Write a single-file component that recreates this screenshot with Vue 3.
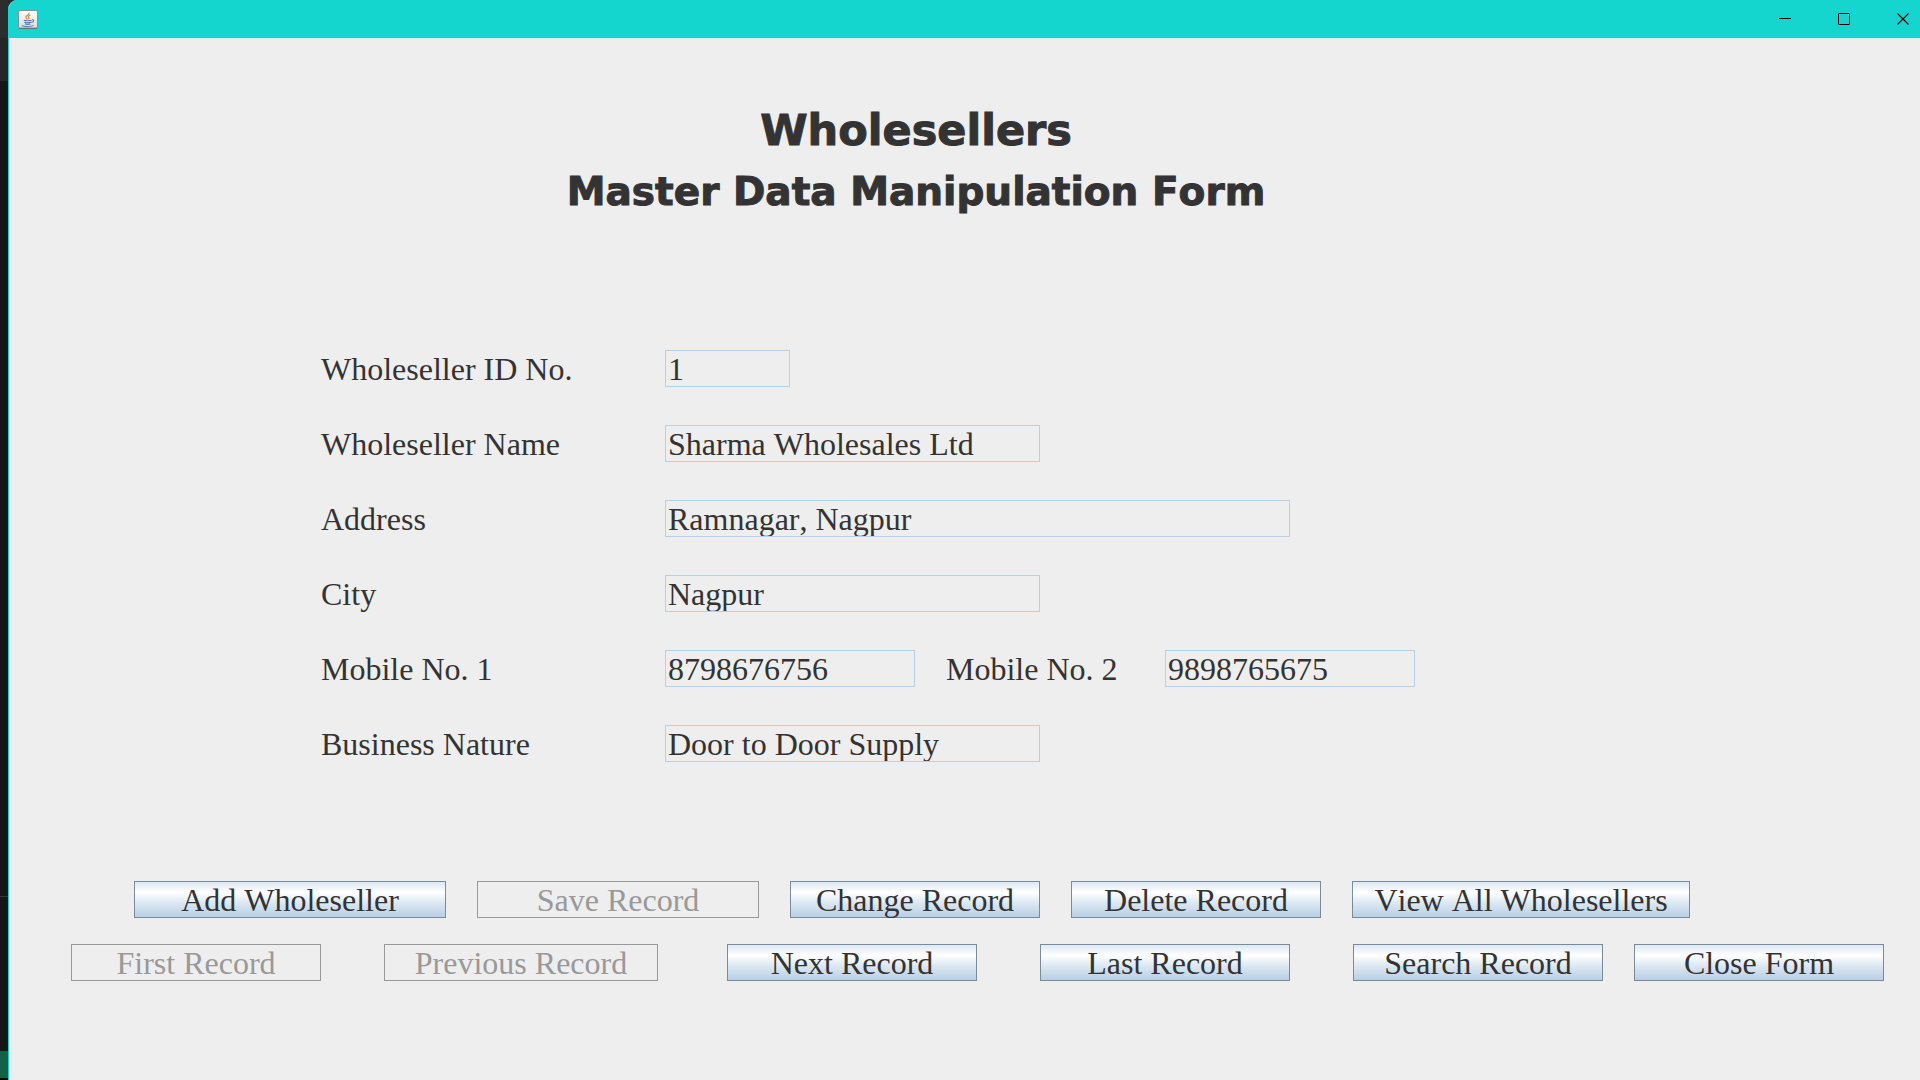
<script setup>
import { ref } from 'vue'

const record = ref({
  id: '1',
  name: 'Sharma Wholesales Ltd',
  address: 'Ramnagar, Nagpur',
  city: 'Nagpur',
  mobile1: '8798676756',
  mobile2: '9898765675',
  business: 'Door to Door Supply',
})

const rows = [
  [{ key: 'id', label: 'Wholeseller ID No.', size: 'short' }],
  [{ key: 'name', label: 'Wholeseller Name', size: 'long' }],
  [{ key: 'address', label: 'Address', size: 'full' }],
  [{ key: 'city', label: 'City', size: 'long' }],
  [
    { key: 'mobile1', label: 'Mobile No. 1', size: 'medium' },
    { key: 'mobile2', label: 'Mobile No. 2', size: 'medium' },
  ],
  [{ key: 'business', label: 'Business Nature', size: 'long' }],
]
</script>

<template>
  <div class="desktop">
    <div class="backdrop" aria-hidden="true">
      <span class="backdrop-top"></span>
      <span class="backdrop-upper"></span>
      <span class="backdrop-main"></span>
      <span class="backdrop-lower"></span>
      <span class="backdrop-status"></span>
    </div>

    <div class="window">
      <header class="titlebar">
        <svg class="app-icon" width="20" height="19" viewBox="0 0 20 19" aria-hidden="true">
          <defs>
            <linearGradient id="tile" x1="0" y1="0" x2="0" y2="1">
              <stop offset="0" stop-color="#ffffff" />
              <stop offset="1" stop-color="#d9dcdc" />
            </linearGradient>
          </defs>
          <rect x="0.5" y="0.5" width="19" height="18" rx="1.5" fill="url(#tile)" stroke="#7d9796" />
          <path d="M1 18.2H19" stroke="#4d6b6b" stroke-width="1" />
          <path d="M10.8 2.8c1.2 1.8-2.9 2.6-2.9 4.3 0 1 .9 1.5 1.5 2.4M12.3 5.2c-1.7.5-2.3 1.3-1.5 2.3.5.7.2 1.3-.5 1.8" fill="none" stroke="#e38b42" stroke-width="1.3" />
          <path d="M5.8 10.2c1.5.7 6.2.7 7.8 0M6.3 12.3c1.5.7 5.5.7 7 0M7 14c1.5.5 4 .5 5.5 0M14 9.8c2.200-.5 2.200 2-.4 2.600M4.500 15.300c-2 1.200 8.500 1.800 11 .1" fill="none" stroke="#5a7fa3" stroke-width="1.1" />
        </svg>
        <div class="window-controls">
          <button type="button" aria-label="Minimize">
            <svg width="12" height="12" viewBox="0 0 12 12"><path d="M0 5.5H12" stroke="#000" /></svg>
          </button>
          <button type="button" aria-label="Maximize">
            <svg width="12" height="12" viewBox="0 0 12 12"><rect x="0.5" y="0.5" width="11" height="11" rx="0.5" fill="none" stroke="#000" /></svg>
          </button>
          <button type="button" aria-label="Close">
            <svg width="12" height="12" viewBox="0 0 12 12"><path d="M0.5 0.5L11.5 11.5M11.5 0.5L0.5 11.5" stroke="#000" stroke-width="1.1" /></svg>
          </button>
        </div>
      </header>

      <main class="content">
        <div class="headings">
          <h1>Wholesellers</h1>
          <h2>Master Data Manipulation Form</h2>
        </div>

        <form class="form" @submit.prevent>
          <div v-for="(row, i) in rows" :key="i" class="row">
            <template v-for="field in row" :key="field.key">
              <label :for="field.key">{{ field.label }}</label>
              <input :id="field.key" v-model="record[field.key]" :class="field.size" type="text" readonly />
            </template>
          </div>
        </form>

        <div class="actions actions-edit">
          <button type="button" class="w-add">Add Wholeseller</button>
          <button type="button" class="w-save" disabled>Save Record</button>
          <button type="button">Change Record</button>
          <button type="button">Delete Record</button>
          <button type="button" class="w-view">View All Wholesellers</button>
        </div>
        <div class="actions actions-browse">
          <button type="button" disabled>First Record</button>
          <button type="button" class="w-previous" disabled>Previous Record</button>
          <button type="button">Next Record</button>
          <button type="button">Last Record</button>
          <div class="pair">
            <button type="button">Search Record</button>
            <button type="button">Close Form</button>
          </div>
        </div>
      </main>
    </div>
  </div>
</template>

<style>
body {
  margin: 0;
  background: #181818;
}
</style>

<style scoped>
.desktop {
  display: flex;
  min-height: 100vh;
  background: #2a2a2a;
  color: #333333;
  font-family: "Liberation Serif", "Times New Roman", serif;
  font-size: 32px;
  font-kerning: none;
}

.backdrop {
  display: flex;
  flex-direction: column;
  flex: none;
  width: 8px;
  background: #000000;
}

.backdrop-top {
  height: 38px;
  background: #2d2d2d;
}

.backdrop-upper {
  height: 43px;
  background: #262626;
}

.backdrop-main {
  flex: 1;
  background: #161616;
  border-bottom: 1px solid #363636;
}

.backdrop-lower {
  height: 154px;
  background: #161616;
}

.backdrop-status {
  height: 27px;
  margin-bottom: 2px;
  background: #126247;
}

.window {
  display: flex;
  flex-direction: column;
  flex: 1;
  min-width: 0;
  border-left: 1px solid #14d6cf;
  border-top-left-radius: 9px;
  background: #eeeeee;
  overflow: hidden;
}

.titlebar {
  display: flex;
  align-items: center;
  justify-content: space-between;
  height: 38px;
  padding-left: 9px;
  background: #14d6cf;
}

.window-controls {
  display: flex;
  gap: 25px;
}

.window-controls button {
  display: flex;
  align-items: center;
  justify-content: center;
  width: 34px;
  height: 38px;
  padding: 0;
  border: 0;
  background: none;
}

.headings {
  margin: 64px 97px 0 0;
  font-family: "Arial Black", "DejaVu Sans", sans-serif;
  text-align: center;
  -webkit-text-stroke: 1px #333333;
}

h1,
h2 {
  margin: 0;
  font-weight: 900;
}

h1 {
  font-size: 43px;
  line-height: 56px;
}

h2 {
  font-size: 39px;
  line-height: 68px;
}

.form {
  display: flex;
  flex-direction: column;
  gap: 38px;
  margin: 124px 0 0 312px;
}

.row {
  display: flex;
  align-items: center;
}

label {
  box-sizing: border-box;
  width: 344px;
  height: 37px;
  padding-top: 2px;
  line-height: 35px;
}

input + label {
  width: 219px;
  margin-left: 31px;
}

input {
  box-sizing: border-box;
  height: 37px;
  padding: 2px 2px 0;
  border: 1px solid #b8cfe5;
  border-radius: 0;
  outline: 0;
  background: #eeeeee;
  color: inherit;
  font: inherit;
}

.short {
  width: 125px;
}

.medium {
  width: 250px;
}

.long {
  width: 375px;
}

.full {
  width: 625px;
}

.actions,
.pair {
  display: flex;
}

.actions-edit {
  gap: 31px;
  margin: 119px 0 0 125px;
}

.actions-browse {
  gap: 63px;
  margin: 26px 0 0 62px;
}

.pair {
  gap: 31px;
}

.actions button {
  box-sizing: border-box;
  flex: none;
  width: 250px;
  height: 37px;
  padding: 2px 0 0;
  border: 1px solid #7a8a99;
  border-radius: 0;
  background: linear-gradient(#dde8f3 0%, #ffffff 30%, #dce8f2 60%, #b8cfe5 100%);
  color: #333333;
  font: inherit;
  line-height: 33px;
  white-space: nowrap;
}

.actions button:disabled {
  border-color: #999999;
  background: #eeeeee;
  color: #999999;
}

.actions .w-add {
  width: 312px;
}

.actions .w-save {
  width: 282px;
}

.actions .w-view {
  width: 338px;
}

.actions .w-previous {
  width: 274px;
  margin-right: 6px;
}
</style>
